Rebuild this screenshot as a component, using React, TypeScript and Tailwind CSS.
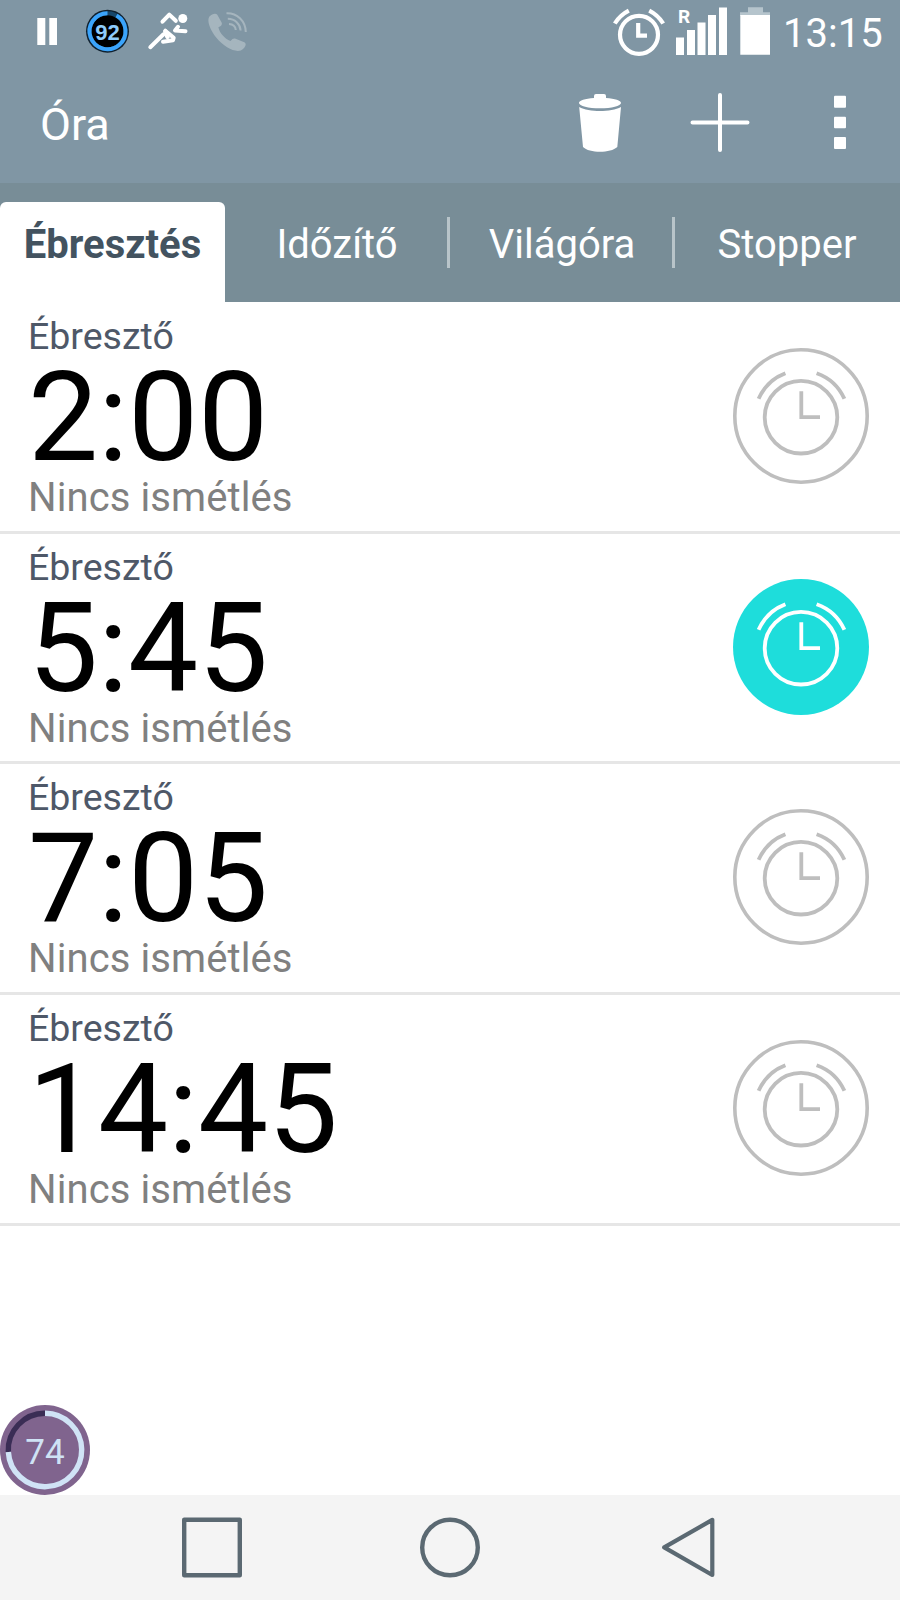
import { useState } from "react";

const initialAlarms = [
  { time: "2:00", label: "Ébresztő", repeat: "Nincs ismétlés", enabled: false },
  { time: "5:45", label: "Ébresztő", repeat: "Nincs ismétlés", enabled: true },
  { time: "7:05", label: "Ébresztő", repeat: "Nincs ismétlés", enabled: false },
  { time: "14:45", label: "Ébresztő", repeat: "Nincs ismétlés", enabled: false },
];

const tabs = ["Ébresztés", "Időzítő", "Világóra", "Stopper"];

function StatusBar() {
  return (
    <div className="flex h-[66px] items-start pl-[37px] text-white">
      {/* Pause */}
      <svg width="20" height="66" viewBox="37 0 20 66" fill="currentColor">
        <path d="M37.3 18h8v27h-8zM49.3 18h8v27h-8z" />
      </svg>
      {/* Battery percentage */}
      <svg className="ml-[28px]" width="45" height="66" viewBox="85 0 45 66">
        <circle cx="107.5" cy="31.2" r="21.5" fill="#10212f" />
        <circle cx="107.5" cy="31.2" r="16" fill="#000" />
        <circle cx="107.5" cy="31.2" r="18" fill="none" stroke="#17476b" strokeWidth="4" />
        <path
          d="M116.5 15.6A18 18 0 1 1 107.5 13.2"
          fill="none"
          stroke="#3ba4fb"
          strokeWidth="4"
        />
        <text
          x="107.5"
          y="39.7"
          textAnchor="middle"
          fill="#8ecbfa"
          className="font-['Liberation_Sans',sans-serif] text-[22px] font-bold"
        >
          92
        </text>
      </svg>
      {/* Runner */}
      <svg
        className="ml-[15px]"
        width="46"
        height="66"
        viewBox="145 0 46 66"
        fill="none"
        stroke="currentColor"
        strokeWidth="4"
        strokeLinecap="round"
        strokeLinejoin="round"
      >
        <circle cx="182.8" cy="18.5" r="4.5" fill="currentColor" stroke="none" />
        <path d="M162.5 21.7 169.3 14.6 175.8 20.8" />
        <path d="M178 26.8 175 30.5 185.5 31.2" />
        <path d="M150.3 47.2 163.5 34.3" />
        <path d="M165.3 30.7 173.7 37.8 173 40.3 163 41.8" />
        <path d="M165.3 31.5 167.5 37" strokeWidth="4.5" />
      </svg>
      {/* Call */}
      <svg className="ml-[16px]" width="42" height="66" viewBox="207 0 42 66" fill="none">
        <path
          d="M209.2 16.8C212 13.8 215.8 12.6 217.3 14.8L221.6 22.6C222.4 24.3 221.5 26 218.4 27.3C219.5 32.8 224.5 38.8 230.5 41C232.6 38.4 233.9 38 235.6 38.7L244.3 42.3C247.5 44.2 244.7 48.6 240.8 50.5C234.5 52.6 224 47.2 216.2 37.6C209.8 29.5 206.8 21 209.2 16.8Z"
          fill="#a5b5be"
        />
        <path
          d="M226.5 13.2C237 12.8 245.5 21 245.8 32M227.8 18.8C235 18.8 240.2 24 240.6 30.5M229 24C233 24.2 235.5 26.8 235.8 30"
          stroke="#a5b5be"
          strokeWidth="2"
        />
      </svg>

      {/* Alarm */}
      <svg
        className="ml-auto"
        width="54"
        height="66"
        viewBox="612 0 54 66"
        fill="none"
        stroke="currentColor"
        strokeWidth="4.2"
      >
        <circle cx="639" cy="34.8" r="19" />
        <path d="M638.2 23V35.7H647" />
        <path d="M614.8 23.5C618.5 17.5 623 13.5 628.8 10.6M649.2 10.6C655 13.5 659.5 17.5 663.2 23.5" />
      </svg>
      {/* Signal */}
      <svg className="ml-[10px]" width="51" height="66" viewBox="676 0 51 66" fill="currentColor">
        <path d="M676 37.5h8V55h-8zM687 30h8v25h-8zM697.5 22.5h8V55h-8zM708 15h8v40h-8zM719 7.5h8V55h-8z" />
        <text x="678" y="23" className="font-['Roboto',sans-serif] text-[19px] font-bold">
          R
        </text>
      </svg>
      {/* Battery */}
      <svg className="ml-[13px]" width="30" height="66" viewBox="740 0 30 66" fill="currentColor">
        <path d="M748 7.3h15v5h7V16h-30v-3.7h8z" fill="#b5c4cc" />
        <path d="M740.3 15h29.7v39.7h-29.7z" />
      </svg>
      <span className="ml-[13px] w-[117px] text-[40px] leading-[68px]">13:15</span>
    </div>
  );
}

function Header() {
  return (
    <div className="flex h-[117px] items-start text-white">
      <h1 className="pl-[40px] text-[45px] leading-[117px]">Óra</h1>
      <button className="ml-auto">
        <svg width="44" height="117" viewBox="578 66 44 117" fill="currentColor">
          <path d="M594 98v-2q0-2 2-2h8q2 0 2 2v2C615 98.5 621 100.5 621 103C621 106 611.5 108.3 600 108.3S579 106 579 103C579 100.5 585 98.5 594 98Z" />
          <path d="M579.2 107C584 109.7 592 111 600 111S616 109.7 621 107L617.3 147C614 150.2 607 151.7 600 151.7S586 150.2 583 147Z" />
        </svg>
      </button>
      <button className="ml-[68px]">
        <svg
          width="60"
          height="117"
          viewBox="690 66 60 117"
          fill="none"
          stroke="currentColor"
          strokeWidth="4"
          strokeLinecap="round"
        >
          <path d="M720 95v55M692.5 122.4h55" />
        </svg>
      </button>
      <button className="mr-[53px] ml-[83px]">
        <svg width="14" height="117" viewBox="833 66 14 117" fill="currentColor">
          <rect x="834" y="95.8" width="12" height="12" rx="1" />
          <rect x="834" y="116.8" width="12" height="11.5" rx="1" />
          <rect x="834" y="137" width="12" height="12" rx="1" />
        </svg>
      </button>
    </div>
  );
}

function AlarmToggle({ enabled, onClick }: { enabled: boolean; onClick: () => void }) {
  return (
    <button
      onClick={onClick}
      className={enabled ? "text-white" : "text-[#bebebe]"}
    >
      <svg width="136" height="136" viewBox="0 0 136 136" fill="none" stroke="currentColor" strokeWidth="3.8">
        {enabled ? (
          <circle cx="68" cy="68" r="68" fill="#1edddb" stroke="none" />
        ) : (
          <circle cx="68" cy="68" r="66.2" strokeWidth="3.6" />
        )}
        <circle cx="68" cy="69.2" r="36.3" />
        <path d="M68.3 43.3V69.2H87" />
        <path d="M25.6 50.8A48 48 0 0 1 52.4 25.2M83.6 25.2A48 48 0 0 1 111.4 50.8" />
      </svg>
    </button>
  );
}

function NavBar() {
  return (
    <div className="flex h-[105px] items-center bg-[#f4f4f4] pl-[181px] text-[#5b6972]">
      <svg width="62" height="62" viewBox="0 0 62 62" fill="none" stroke="currentColor" strokeWidth="4.4" strokeLinejoin="round">
        <path d="M3.2 2.7h55.6v55.6H3.2z" />
      </svg>
      <svg className="ml-[176px]" width="62" height="62" viewBox="0 0 62 62" fill="none" stroke="currentColor" strokeWidth="4.4">
        <circle cx="31" cy="30.5" r="27.8" />
      </svg>
      <svg className="ml-[180px]" width="54" height="62" viewBox="0 0 54 62" fill="none" stroke="currentColor" strokeWidth="4.2" strokeLinejoin="round">
        <path d="M51.3 2.9V58L3.2 30.4z" />
      </svg>
    </div>
  );
}

export default function App() {
  const [alarms, setAlarms] = useState(initialAlarms);
  const [activeTab, setActiveTab] = useState("Ébresztés");

  const toggleAlarm = (index: number) => {
    setAlarms(alarms.map((a, i) => (i === index ? { ...a, enabled: !a.enabled } : a)));
  };

  return (
    <div className="flex h-[1600px] w-[900px] flex-col overflow-hidden bg-white font-['Roboto',sans-serif]">
      <div className="bg-[#8096a4]">
        <StatusBar />
        <Header />
      </div>

      <div className="grid h-[119px] grid-cols-4 bg-[#788d97] pt-[19px]">
        {tabs.map((tab, index) => (
          <button
            key={tab}
            onClick={() => setActiveTab(tab)}
            className={
              tab === activeTab
                ? "rounded-t-md bg-white pb-3.5 text-[40px] font-bold text-[#435360]"
                : "relative pr-px pb-3.5 text-[40px] text-white"
            }
          >
            {tab}
            {index > 1 && (
              <span className="absolute top-[15px] -left-[3px] h-[51px] w-[3px] bg-[#b8c4c9]" />
            )}
          </button>
        ))}
      </div>

      <ul className="flex-1 pt-px">
        {alarms.map((alarm, index) => (
          <li
            key={index}
            className="flex h-[230.67px] items-start justify-between border-b-3 border-[#e6e6e6] pr-[31px] pl-[28px]"
          >
            <div className="pt-[11px]">
              <p className="text-[37.5px] leading-[45px] text-[#4e5868]">{alarm.label}</p>
              <p className="pt-px text-[125px] leading-[115px] tracking-[-0.3px] text-black">{alarm.time}</p>
              <p className="text-[40px] leading-[46px] tracking-[0.1px] text-[#808080]">{alarm.repeat}</p>
            </div>
            <div className="pt-[45px]">
              <AlarmToggle enabled={alarm.enabled} onClick={() => toggleAlarm(index)} />
            </div>
          </li>
        ))}
      </ul>

      {/* Floating battery bubble */}
      <svg width="90" height="90" viewBox="0 0 90 90" fill="none">
        <circle cx="45" cy="45" r="45" fill="#80648e" />
        <path d="M8.3 47A36.7 36.7 0 0 1 45 8.3" stroke="#3a2d55" strokeWidth="5.4" />
        <path d="M45 8.3A36.7 36.7 0 1 1 8.35 47" stroke="#d0e3f6" strokeWidth="5.4" />
        <text
          x="45"
          y="58.5"
          textAnchor="middle"
          fill="#cfe2f5"
          className="font-['Roboto',sans-serif] text-[35px]"
        >
          74
        </text>
      </svg>
      <NavBar />
    </div>
  );
}
